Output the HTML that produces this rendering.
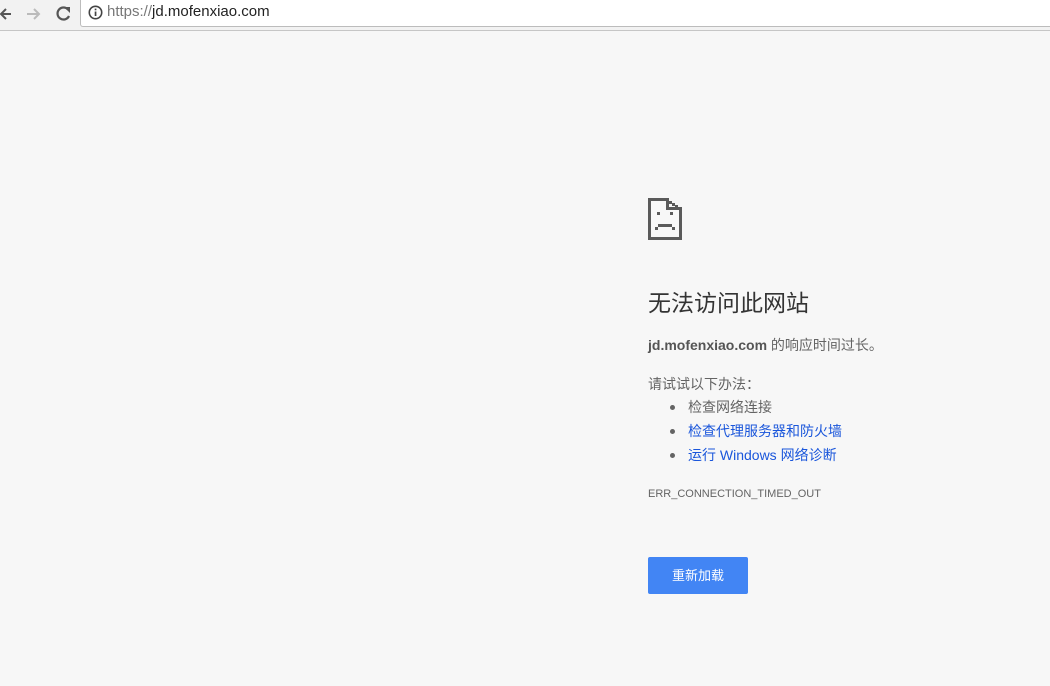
<!DOCTYPE html>
<html><head><meta charset="utf-8"><style>
*{margin:0;padding:0;box-sizing:border-box}
body{width:1050px;height:686px;background:#f7f7f7;font-family:"Liberation Sans","Noto Sans CJK SC",sans-serif;position:relative;overflow:hidden;color:#646464}
.bar{position:absolute;left:0;top:0;width:1050px;height:31px;background:#f2f2f2;border-bottom:1px solid #c6c6c6}
.url{position:absolute;left:80px;top:0;width:980px;height:27px;background:#fff;border:1px solid #bcbcbc;border-top:none;border-radius:0 0 0 3px}
.url .u{position:absolute;left:26px;top:3px;font-size:15px;color:#222}
.url .g{color:#777}
.a{position:absolute}
h1{position:absolute;left:648px;top:284px;font-size:23px;font-weight:normal;color:#333}
.t{position:absolute;left:648px;font-size:14px}
ul{position:absolute;left:688px;top:396px;font-size:14px;list-style:none}
ul li{height:24px;line-height:22px;position:relative;white-space:nowrap}
ul li:before{content:"";position:absolute;left:-18px;top:9px;width:5px;height:5px;border-radius:50%;background:#646464}
.lk{color:#1a56db}
.btn{position:absolute;left:648px;top:557px;width:100px;height:37px;background:#4285f4;border-radius:2px;color:#fff;font-size:13px;text-align:center;line-height:37px}
</style></head><body>
<div class="bar">
<svg class="a" style="left:0;top:4px" width="75" height="20" viewBox="0 0 75 20">
<path d="M11 10H1M6 5l-5 5 5 5" stroke="#555" stroke-width="2" fill="none"/>
<path d="M27 10h12M34 5l5 5-5 5" stroke="#bbb" stroke-width="2" fill="none"/>
<path d="M68 5.5A6 6 0 1 0 69 12" stroke="#555" stroke-width="2.2" fill="none"/><path d="M64 3h6v6z" fill="#555"/>
</svg>
<div class="url"><svg class="a" style="left:7px;top:5px" width="15" height="15" viewBox="0 0 15 15"><circle cx="7.5" cy="7.5" r="6.2" stroke="#444" stroke-width="1.6" fill="none"/><rect x="6.7" y="6.5" width="1.7" height="4.5" fill="#444"/><rect x="6.7" y="3.6" width="1.7" height="1.7" fill="#444"/></svg><div class="u"><span class="g">https://</span>jd.mofenxiao.com</div></div>
</div>
<svg class="a" style="left:648px;top:198px" width="34" height="42" viewBox="0 0 34 42" shape-rendering="crispEdges" fill="#5a5a5a">
<rect x="0" y="0" width="3" height="42"/><rect x="0" y="39" width="34" height="3"/><rect x="31" y="12" width="3" height="30"/>
<rect x="0" y="0" width="21" height="3"/><rect x="18" y="0" width="3" height="12"/><rect x="18" y="9" width="16" height="3"/>
<rect x="21" y="3" width="3" height="3"/><rect x="24" y="5" width="3" height="3"/><rect x="27" y="7" width="3" height="3"/>
<rect x="9" y="14" width="3" height="3"/><rect x="22" y="14" width="3" height="3"/>
<rect x="10" y="26" width="14" height="3"/><rect x="7" y="29" width="3" height="3"/><rect x="24" y="29" width="3" height="3"/>
</svg>
<h1>无法访问此网站</h1>
<div class="t" style="top:335px"><b style="color:#555">jd.mofenxiao.com</b> 的响应时间过长。</div>
<div class="t" style="top:374px">请试试以下办法：</div>
<ul><li>检查网络连接</li><li class="lk">检查代理服务器和防火墙</li><li class="lk">运行 Windows 网络诊断</li></ul>
<div class="t" style="top:488px;font-size:11px">ERR_CONNECTION_TIMED_OUT</div>
<div class="btn">重新加载</div>
</body></html>
